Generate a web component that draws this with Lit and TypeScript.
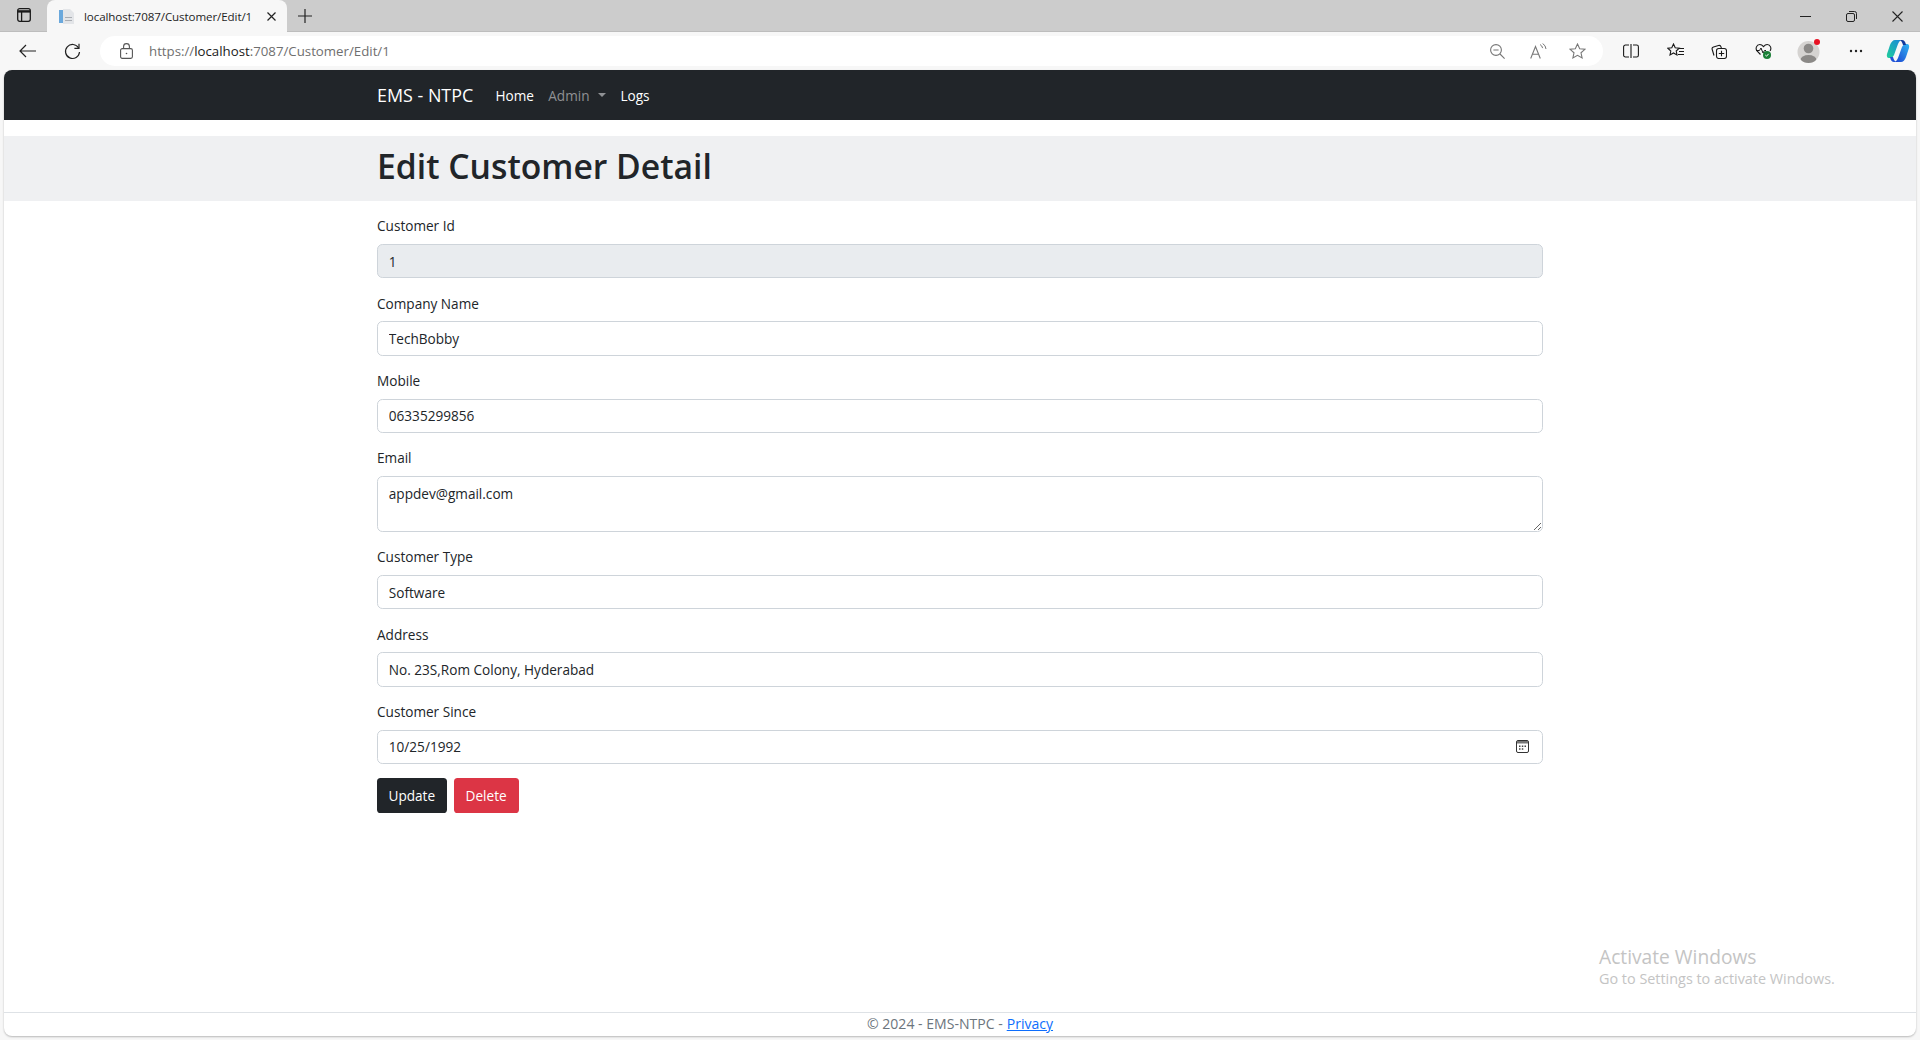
import { LitElement, html, css } from 'lit';
import { customElement } from 'lit/decorators.js';

const fields = [
    { label: 'Company Name', value: 'TechBobby' },
    { label: 'Mobile', value: '06335299856' },
];

const fieldsAfterEmail = [
    { label: 'Customer Type', value: 'Software' },
    { label: 'Address', value: 'No. 23S,Rom Colony, Hyderabad' },
];

@customElement('app-root')
export class AppRoot extends LitElement {
    static styles = css`
        :host {
            display: block;
            height: 1040px;
            overflow: hidden;
            background: #f7f7f7;
            font-family: 'Open Sans', 'Noto Sans', sans-serif;
            color: #212529;
            position: relative;
        }

        svg {
            display: block;
            flex: none;
        }

        .tabstrip {
            display: flex;
            align-items: flex-end;
            height: 32px;
            box-sizing: border-box;
            background: #cccccc;
            border-bottom: 1px solid #bdbdbd;
        }

        .tab-toggle {
            display: flex;
            justify-content: center;
            width: 47px;
            padding-bottom: 9px;
        }

        .tab {
            display: flex;
            align-items: center;
            width: 240px;
            height: 32px;
            margin-bottom: -1px;
            box-sizing: border-box;
            padding: 0 10px 0 12px;
            background: #f7f7f7;
            border-radius: 8px 8px 0 0;
            font-size: 11.6px;
            letter-spacing: -0.1px;
            color: #1f1f1f;
        }

        .tab-title {
            flex: 1;
            margin-left: 10px;
            white-space: nowrap;
        }

        .new-tab {
            padding: 0 0 8px 11px;
        }

        .spacer {
            flex: 1;
        }

        .window-buttons {
            display: flex;
            align-items: center;
            gap: 35px;
            padding: 0 17px 9px 0;
        }

        .toolbar {
            display: flex;
            align-items: center;
            height: 38px;
            box-sizing: border-box;
            padding: 0 10px 0 19px;
        }

        .nav-btn {
            margin-right: 27.5px;
        }

        .reload {
            margin-right: 19.5px;
        }

        .address {
            display: flex;
            align-items: center;
            width: 1503px;
            height: 30px;
            box-sizing: border-box;
            padding: 0 16.7px 0 20px;
            background: #ffffff;
            border-radius: 15px;
            font-size: 13.25px;
            color: #6f6f6f;
        }

        .url {
            flex: 1;
            margin-left: 16px;
        }

        .url b {
            font-weight: 400;
            color: #1a1a1a;
        }

        .address-icons {
            display: flex;
            align-items: center;
            gap: 21px;
        }

        .read-aloud {
            margin-left: 4px;
        }

        .tools {
            display: flex;
            align-items: center;
            gap: 27.5px;
            flex: 1;
            padding-left: 20px;
        }

        .avatar {
            margin-left: -2px;
        }

        .copilot {
            margin-left: -4px;
        }

        .page {
            display: flex;
            flex-direction: column;
            height: 966px;
            margin: 0 4px;
            background: #ffffff;
            border-radius: 8px;
            overflow: hidden;
            box-shadow: 0 1px 2px rgba(0, 0, 0, 0.25);
        }

        .container {
            width: 1166px;
            margin: 0 auto;
        }

        .navbar {
            height: 50px;
            flex: none;
            margin-bottom: 16px;
            background: #212529;
        }

        .navbar .container {
            display: flex;
            align-items: center;
            height: 100%;
        }

        .brand {
            font-size: 17.9px;
            color: #ffffff;
            margin-right: 15px;
        }

        .nav-link {
            padding: 0 7.2px;
            font-size: 13.6px;
            font-weight: 500;
            color: #ffffff;
        }

        .nav-link.muted {
            display: flex;
            align-items: center;
            color: #8f9194;
        }

        .caret {
            margin-left: 8.5px;
            border-top: 4px solid currentColor;
            border-left: 4px solid transparent;
            border-right: 4px solid transparent;
        }

        .band {
            flex: none;
            height: 64.8px;
            background: #eff0f2;
        }

        h1 {
            margin: 0;
            font-size: 33.7px;
            line-height: 60px;
            font-weight: 600;
            color: #212529;
        }

        form {
            padding-top: 14.4px;
        }

        .group {
            margin-bottom: 14.4px;
        }

        label {
            display: block;
            margin-bottom: 7.2px;
            font-size: 13.6px;
            line-height: 21.6px;
            color: #212529;
        }

        .control {
            display: block;
            width: 100%;
            height: 34.2px;
            box-sizing: border-box;
            padding: 5.4px 10.8px;
            font: inherit;
            font-size: 13.6px;
            line-height: 21.6px;
            color: #212529;
            background: #ffffff;
            border: 1px solid #ced4da;
            border-radius: 5.4px;
            outline: none;
        }

        .control:disabled {
            background: #e9ecef;
            opacity: 1;
        }

        textarea.control {
            height: 55.8px;
            padding-top: 6.4px;
            resize: vertical;
        }

        input[type='date']::-webkit-datetime-edit,
        input[type='date']::-webkit-datetime-edit-fields-wrapper,
        input[type='date']::-webkit-datetime-edit-month-field,
        input[type='date']::-webkit-datetime-edit-day-field,
        input[type='date']::-webkit-datetime-edit-year-field {
            padding: 0;
        }

        input[type='date']::-webkit-calendar-picker-indicator {
            background-image: url("data:image/svg+xml,%3Csvg xmlns='http://www.w3.org/2000/svg' viewBox='0 0 13 13'%3E%3Crect x='.5' y='.5' width='12' height='12' rx='1.5' fill='none' stroke='%23333'/%3E%3Crect x='1' y='1' width='11' height='2.5' fill='%23777'/%3E%3Cpath d='M3 5.5h1.500v1.500H3zM5.800 5.500h1.500v1.500H5.800zM8.500 5.500H10v1.500H8.500zM3 8.300h1.500v1.500H3zM5.800 8.300h1.500v1.500H5.800z' fill='%23444'/%3E%3C/svg%3E");
        }

        .actions {
            display: flex;
            gap: 7px;
        }

        .btn {
            height: 34.2px;
            box-sizing: border-box;
            padding: 0 11.5px;
            font: inherit;
            font-size: 13.6px;
            color: #ffffff;
            border: none;
            border-radius: 3.6px;
        }

        .btn.dark {
            background: #212529;
        }

        .btn.danger {
            padding: 0 12px;
            background: #dc3545;
        }

        footer {
            display: flex;
            align-items: center;
            justify-content: center;
            gap: 4px;
            height: 21px;
            padding-bottom: 2px;
            margin-top: auto;
            border-top: 1px solid #dee2e6;
            font-size: 14.05px;
            color: #6c757d;
        }

        footer a {
            color: #0d6efd;
        }

        .watermark {
            position: absolute;
            left: 1599px;
            top: 944px;
            color: #c4c4c4;
            font-size: 14.4px;
        }

        .watermark div:first-child {
            font-size: 19.2px;
            line-height: 25px;
        }

        .watermark div:last-child {
            line-height: 19px;
        }
    `;

    renderTabstrip() {
        return html`
            <div class="tabstrip">
                <div class="tab-toggle">
                    <svg width="14" height="14" viewBox="0 0 14 14" fill="none" stroke="#1a1a1a" stroke-width="1.3">
                        <rect x=".7" y=".7" width="12.6" height="12.6" rx="2"></rect>
                        <path d="M.7 3.4h12.6" stroke-width="2.4"></path>
                        <path d="M4.6 3.4v10"></path>
                    </svg>
                </div>
                <div class="tab">
                    <svg width="15" height="15" viewBox="0 0 15 15">
                        <path d="M0 1h4v13H0z" fill="#6aa8dc"></path>
                        <path d="M4 0h7l4 4v11H4z" fill="#e3e5e8"></path>
                        <path d="M6 8h7v1H6zM6 11h7v1H6z" fill="#a9adb3"></path>
                    </svg>
                    <span class="tab-title">localhost:7087/Customer/Edit/1</span>
                    <svg width="11" height="11" viewBox="0 0 11 11" stroke="#222" stroke-width="1.2">
                        <path d="M1.5 1.5l8 8M9.5 1.5l-8 8"></path>
                    </svg>
                </div>
                <div class="new-tab">
                    <svg width="14" height="14" viewBox="0 0 14 14" stroke="#222" stroke-width="1.2">
                        <path d="M7 0v14M0 7h14"></path>
                    </svg>
                </div>
                <div class="spacer"></div>
                <div class="window-buttons">
                    <svg width="11" height="11" viewBox="0 0 11 11" stroke="#222"><path d="M0 5.5h11"></path></svg>
                    <svg width="11" height="11" viewBox="0 0 11 11" fill="none" stroke="#222">
                        <rect x=".5" y="2.5" width="8" height="8" rx="1.5"></rect>
                        <path d="M3 .5h5.5a2 2 0 0 1 2 2V8"></path>
                    </svg>
                    <svg width="11" height="11" viewBox="0 0 11 11" stroke="#222" stroke-width="1.1">
                        <path d="M.5.5l10 10M10.5.5l-10 10"></path>
                    </svg>
                </div>
            </div>
        `;
    }

    renderToolbar() {
        return html`
            <div class="toolbar">
                <svg class="nav-btn" width="17" height="14" viewBox="0 0 17 14" fill="none" stroke="#222" stroke-width="1.2">
                    <path d="M17 7H1M7 1L1 7l6 6"></path>
                </svg>
                <svg class="reload" width="17" height="17" viewBox="0 0 17 17" fill="none" stroke="#222" stroke-width="1.2">
                    <path d="M14.6 5A7 7 0 1 0 15.5 9"></path>
                    <path d="M15 .8V5.4h-4.6"></path>
                </svg>
                <div class="address">
                    <svg width="13" height="16" viewBox="0 0 13 16" fill="none" stroke="#555" stroke-width="1.1">
                        <rect x=".6" y="5.6" width="11.8" height="9.8" rx="1.6"></rect>
                        <path d="M3.6 5.6V3.5a2.9 2.9 0 0 1 5.8 0v2.1"></path>
                        <circle cx="6.5" cy="10.5" r=".8" fill="#555" stroke="none"></circle>
                    </svg>
                    <span class="url">https://<b>localhost</b>:7087/Customer/Edit/1</span>
                    <div class="address-icons">
                        <svg width="15" height="15" viewBox="0 0 15 15" fill="none" stroke="#777" stroke-width="1.1">
                            <circle cx="6" cy="6" r="5.4"></circle>
                            <path d="M3.4 6h5.2M10 10l4.6 4.6"></path>
                        </svg>
                        <svg class="read-aloud" width="18" height="16" viewBox="0 0 18 16" fill="none" stroke="#777" stroke-width="1.1">
                            <path d="M.7 15.5L5.5 3.5l4.8 12M2.4 11.3h6.2"></path>
                            <path d="M10 1.5a5 5 0 0 1 2.6 3.6M12.6.5a7 7 0 0 1 3.4 5.5" stroke-width="1"></path>
                        </svg>
                        <svg width="17" height="16" viewBox="0 0 17 16" fill="none" stroke="#777" stroke-width="1.1">
                            <path d="M8.5 1l2.2 4.7 5.2.6-3.9 3.5 1.1 5.1-4.6-2.6-4.6 2.6 1.1-5.1L1.1 6.3l5.2-.6z"></path>
                        </svg>
                    </div>
                </div>
                <div class="tools">
                    <svg width="16" height="14" viewBox="0 0 16 14" fill="none" stroke="#1a1a1a" stroke-width="1.1">
                        <path d="M6 1H2.4A1.8 1.8 0 0 0 .6 2.8v8.4A1.8 1.8 0 0 0 2.4 13H6M10 1h3.6a1.8 1.8 0 0 1 1.8 1.8v8.4a1.8 1.8 0 0 1-1.8 1.8H10M8 0v14"></path>
                    </svg>
                    <svg width="17" height="16" viewBox="0 0 17 16" fill="none" stroke="#1a1a1a" stroke-width="1.1">
                        <path d="M6.5 1l1.7 3.7 4 .5-3 2.8.8 4-3.5-2-3.5 2 .8-4-3-2.8 4-.5z"></path>
                        <path d="M12 5.5h5M12 8.5h5M11 11.5h6" stroke-width="1"></path>
                    </svg>
                    <svg width="16" height="16" viewBox="0 0 16 16" fill="none" stroke="#1a1a1a" stroke-width="1.1">
                        <path d="M3 12.5L1.2 6.5a2 2 0 0 1 1.3-2.5l5-1.5a2 2 0 0 1 2.5 1.3l.4 1.2"></path>
                        <rect x="5.5" y="5.5" width="10" height="10" rx="2.2"></rect>
                        <path d="M10.5 7.8v5.4M7.8 10.5h5.4"></path>
                    </svg>
                    <svg width="17" height="16" viewBox="0 0 17 16">
                        <path d="M5.5 11.5L2 7.8C.2 5.600 1.400 1.500 4.800 1.500c1.700 0 2.800 1 3.700 2.100.9-1.100 2-2.100 3.700-2.100 3.400 0 4.600 4.100 2.800 6.300" fill="none" stroke="#1a1a1a" stroke-width="1.1"></path>
                        <path d="M1 7.5h3.500l1.500-2.500 2 5 1.500-2.500h1.500" fill="none" stroke="#1a1a1a" stroke-width="1"></path>
                        <circle cx="12" cy="12" r="4" fill="#1a7f37"></circle>
                        <path d="M10.300 12l1.200 1.200 2.200-2.400" fill="none" stroke="#fff" stroke-width="1"></path>
                    </svg>
                    <svg class="avatar" width="24" height="24" viewBox="0 0 24 24">
                        <defs>
                            <clipPath id="avatar"><circle cx="11.5" cy="13" r="11"></circle></clipPath>
                        </defs>
                        <circle cx="11.5" cy="13" r="11" fill="#d5d3d1"></circle>
                        <g clip-path="url(#avatar)" fill="#8b8987">
                            <circle cx="11.5" cy="9.5" r="4.8"></circle>
                            <ellipse cx="11.5" cy="21" rx="8" ry="5"></ellipse>
                        </g>
                        <circle cx="20" cy="3" r="3" fill="#e81123"></circle>
                    </svg>
                    <svg width="14" height="4" viewBox="0 0 14 4" fill="#222">
                        <circle cx="2" cy="2" r="1.2"></circle>
                        <circle cx="7" cy="2" r="1.2"></circle>
                        <circle cx="12" cy="2" r="1.2"></circle>
                    </svg>
                    <svg class="copilot" width="24" height="24" viewBox="0 0 24 24">
                        <defs>
                            <linearGradient id="cpa" x1="0" y1="1" x2="1" y2="0">
                                <stop offset="0" stop-color="#1fcf9a"></stop>
                                <stop offset="1" stop-color="#1b86dc"></stop>
                            </linearGradient>
                            <linearGradient id="cpb" x1="0" y1="1" x2="1" y2="0">
                                <stop offset="0" stop-color="#2fb4f2"></stop>
                                <stop offset="1" stop-color="#1c3fd0"></stop>
                            </linearGradient>
                        </defs>
                        <path d="M9 1H16C14 1 13 3 12 5L8 16C7 18 6 19 4 19H3C1 19 .5 17 1 15L4 6C5 3 7 1 9 1z" fill="url(#cpa)"></path>
                        <path d="M9 1H16C14 1 13 3 12 5L8 16C7 18 6 19 4 19H3C1 19 .5 17 1 15L4 6C5 3 7 1 9 1z" fill="url(#cpb)" transform="rotate(180 12 12)"></path>
                        <path d="M13.5 1H16c2 0 3 1.500 3.500 3l.5 2h-3c-.8-2.800-2-5-3.500-5z" fill="#123a9c"></path>
                        <path d="M10.500 23H8c-2 0-3-1.500-3.500-3L4 18h3c.8 2.800 2 5 3.500 5z" fill="#1f54d8"></path>
                    </svg>
                </div>
            </div>
        `;
    }

    renderField(label: string, value: string) {
        return html`
            <div class="group">
                <label>${label}</label>
                <input class="control" .value=${value} />
            </div>
        `;
    }

    render() {
        return html`
            ${this.renderTabstrip()}
            ${this.renderToolbar()}
            <div class="page">
                <nav class="navbar">
                    <div class="container">
                        <span class="brand">EMS - NTPC</span>
                        <a class="nav-link">Home</a>
                        <a class="nav-link muted">Admin<span class="caret"></span></a>
                        <a class="nav-link">Logs</a>
                    </div>
                </nav>
                <div class="band">
                    <div class="container"><h1>Edit Customer Detail</h1></div>
                </div>
                <form class="container">
                    <div class="group">
                        <label>Customer Id</label>
                        <input class="control" disabled .value=${'1'} />
                    </div>
                    ${fields.map((f) => this.renderField(f.label, f.value))}
                    <div class="group">
                        <label>Email</label>
                        <textarea class="control" .value=${'appdev@gmail.com'}></textarea>
                    </div>
                    ${fieldsAfterEmail.map((f) => this.renderField(f.label, f.value))}
                    <div class="group">
                        <label>Customer Since</label>
                        <input class="control" type="date" .value=${'1992-10-25'} />
                    </div>
                    <div class="actions">
                        <button type="button" class="btn dark">Update</button>
                        <button type="button" class="btn danger">Delete</button>
                    </div>
                </form>
                <footer>
                    <span>© 2024 - EMS-NTPC -</span>
                    <a href="#">Privacy</a>
                </footer>
            </div>
            <div class="watermark">
                <div>Activate Windows</div>
                <div>Go to Settings to activate Windows.</div>
            </div>
        `;
    }
}
